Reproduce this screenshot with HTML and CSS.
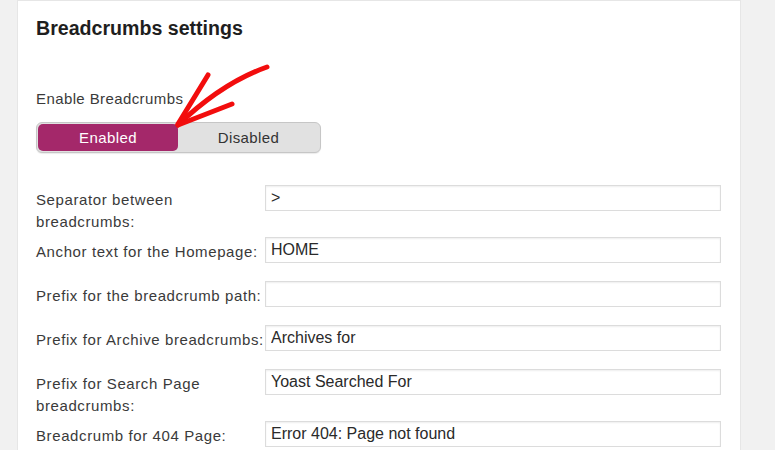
FILE: index.html
```html
<!DOCTYPE html>
<html>
<head>
	<meta charset="UTF-8">
	<title>Breadcrumbs settings</title>
	<link rel="stylesheet" href="styles.css">
</head>
<body>
	<div class="card">
		<h2 class="title">Breadcrumbs settings</h2>

		<div class="field-label">Enable Breadcrumbs</div>
		<div class="switch">
			<span class="switch-opt on">Enabled</span>
			<span class="switch-opt">Disabled</span>
		</div>

		<svg class="arrow" width="120" height="80" viewBox="0 0 120 80">
			<path d="M107 12 Q62 28 18 70" />
			<path d="M48 20 L18 69" />
			<path d="M72 49 L18 70" />
		</svg>

		<div class="rows">
			<div class="row">
				<label class="row-label">Separator between breadcrumbs:</label>
				<input class="text" type="text" value="&gt;">
			</div>
			<div class="row">
				<label class="row-label">Anchor text for the Homepage:</label>
				<input class="text" type="text" value="HOME">
			</div>
			<div class="row">
				<label class="row-label">Prefix for the breadcrumb path:</label>
				<input class="text" type="text" value="">
			</div>
			<div class="row">
				<label class="row-label">Prefix for Archive breadcrumbs:</label>
				<input class="text" type="text" value="Archives for">
			</div>
			<div class="row">
				<label class="row-label">Prefix for Search Page breadcrumbs:</label>
				<input class="text" type="text" value="Yoast Searched For">
			</div>
			<div class="row">
				<label class="row-label">Breadcrumb for 404 Page:</label>
				<input class="text" type="text" value="Error 404: Page not found">
			</div>
		</div>
	</div>
</body>
</html>
```

FILE: styles.css
```css
* {
	margin: 0;
	padding: 0;
	box-sizing: border-box;
}

body {
	background: #f1f1f1;
	font-family: "Liberation Sans", Arial, sans-serif;
	color: #3a3a3a;
	overflow: hidden;
}

.card {
	position: relative;
	margin-left: 17px;
	width: 724px;
	height: 470px;
	background: #fff;
	border: 1px solid #e6e6e6;
	padding: 15px 19px 0 18px;
}

.title {
	font-size: 19.6px;
	line-height: 24px;
	font-weight: bold;
	color: #1e1e1e;
}

.field-label {
	margin-top: 48px;
	font-size: 15px;
	line-height: 22px;
	letter-spacing: 0.4px;
}

.switch {
	display: flex;
	width: 285px;
	height: 31px;
	margin-top: 12px;
	padding: 1px;
	background: #e1e1e1;
	border: 1px solid #c6c6c6;
	border-radius: 6px;
	box-shadow: 0 1px 1px rgba(0, 0, 0, 0.08);
}

.switch-opt {
	flex: 1;
	text-align: center;
	font-size: 15px;
	line-height: 27px;
	letter-spacing: 0.4px;
	color: #333;
}

.switch-opt.on {
	flex: 0 0 140px;
	background: #a4286a;
	color: #fff;
	border-radius: 5px;
}

.arrow {
	position: absolute;
	left: 142px;
	top: 54px;
	fill: none;
	stroke: #f20d0d;
	stroke-width: 5;
	stroke-linecap: round;
}

.rows {
	margin-top: 32px;
}

.row {
	display: grid;
	grid-template-columns: 229px 1fr;
	align-items: start;
	min-height: 44px;
}

.row-label {
	padding: 4px 0;
	font-size: 15px;
	line-height: 22px;
	letter-spacing: 0.6px;
	color: #3a3a3a;
}

.text {
	height: 26px;
	width: 100%;
	padding: 0 5px;
	border: 1px solid #dcdcdc;
	box-shadow: inset 0 1px 2px rgba(0, 0, 0, 0.07);
	font-family: "Liberation Sans", Arial, sans-serif;
	font-size: 16px;
	color: #2a2a2a;
	background: #fff;
	outline: none;
}
```
